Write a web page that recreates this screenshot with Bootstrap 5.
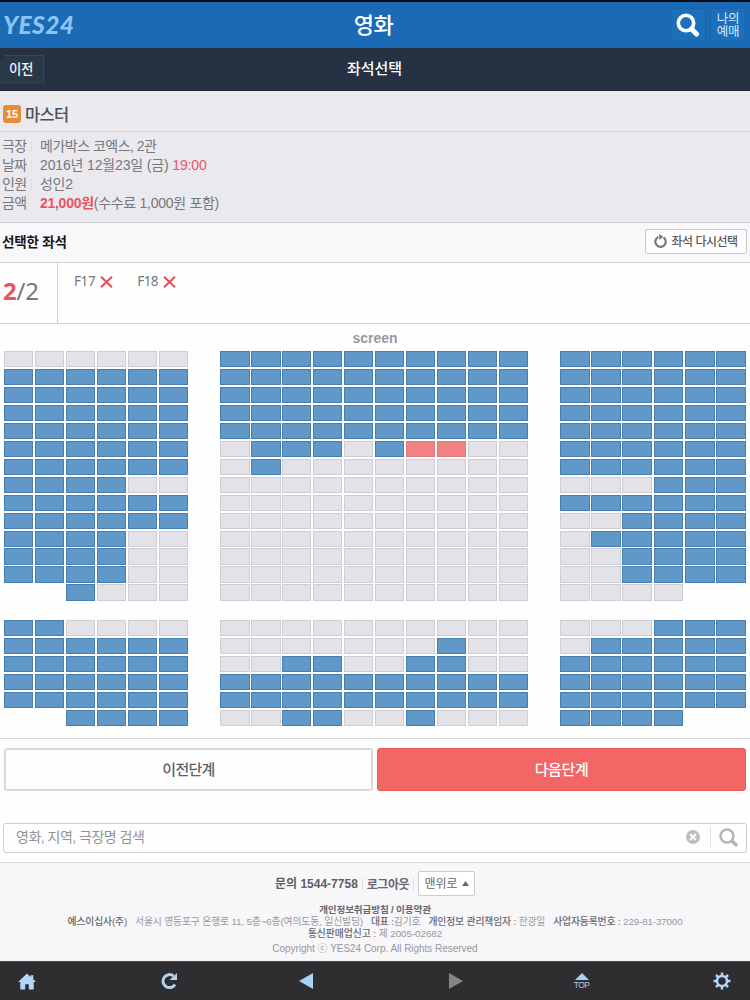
<!DOCTYPE html>
<html lang="ko">
<head>
<meta charset="utf-8">
<meta name="viewport" content="width=device-width, initial-scale=1">
<title>YES24 영화 - 좌석선택</title>
<link href="https://cdn.jsdelivr.net/npm/bootstrap@5.3.0/dist/css/bootstrap.min.css" rel="stylesheet">
<style>
body{font-family:"Liberation Sans","Noto Sans CJK KR",sans-serif;font-size:14px;line-height:19px;color:#77777c;background:#fefefe;width:750px;height:1000px;overflow:hidden;white-space:nowrap}
.kr{font-family:"Noto Sans CJK KR",sans-serif}
.topbar{height:48px;background:#1b6ab5;border-top:2px solid #060d18;display:grid;grid-template-columns:1fr auto 1fr}
.brand-text{font:italic 900 24.5px/1 Lato,sans-serif;color:#8cc4f4;letter-spacing:.4px;padding:0 0 0 3px}
.page-title{font-size:22px;font-weight:500;color:#fff;line-height:40px;letter-spacing:-.4px;padding:0 3px 5px 0}
.sq{width:36px;height:34px;border:1px solid #1964ae;border-radius:3px;background:#1c70bb}
.mine{color:#d5eaff;font-size:12.5px;line-height:13px;letter-spacing:-.2px;padding-bottom:2px}
.mine span{height:13px}
.subbar{height:43px;background:#263243;border-bottom:1px solid #1c2636;display:grid;grid-template-columns:1fr auto 1fr;color:#fff}
.back-btn{width:44px;height:29px;background:#2a3947;border:1px solid #35475a;border-left:0;clip-path:polygon(5px 0,100% 0,100% 100%,0 100%,0 8px);color:#eef3fa;font-size:13.5px;font-weight:500;line-height:25px;padding-left:9px;letter-spacing:-.4px}
.sub-title{font-size:15px;font-weight:500;line-height:38px;letter-spacing:0;padding:0 1px 2px 0}
.movie{height:41px;background:#ebebef;border-bottom:1px solid #cfcfd4;padding:6px 0 0 3px;font-size:16.5px;font-weight:500;color:#505055;letter-spacing:-.7px}
.rating{width:18px;height:18px;border-radius:3px;background:#ea8a3a;color:#fff;font:700 11px/18px "Liberation Sans",sans-serif;letter-spacing:0;text-align:center}
.info{height:91px;background:#e9e9ee;border-bottom:1px solid #d0d0d5;padding:4.500px 0 0 2px}
.info dt{width:31px;height:19px;font-weight:400;letter-spacing:-.6px;border:0}
.info dt span{display:inline-block;width:25px}
.info dd{margin:0 0 0 7px;height:19px;letter-spacing:-.28px}
.info .l1{letter-spacing:-.5px}
.info .l2{letter-spacing:-.15px}
.info i{width:1px;height:11px;background:#dedee4}
.coral{color:#e95560}
.selhead{height:40px;background:#f8f7f9;border-bottom:1px solid #d2d2d6;padding:0 3px 2px 2px;color:#161616;font-size:13.5px}
.selhead strong{letter-spacing:-.2px}
.reset-btn{width:102px;height:25px;background:#fefefe;border:1px solid #c9c9cd;border-radius:2px;color:#5a5a5e;font-size:12px;font-weight:500;letter-spacing:-.5px;padding:0 0 2px 0}
.picked{height:61px;border-bottom:1px solid #d0d0d2}
.count{width:58px;border-right:1px solid #cfcfd2;font:24px/55px "Noto Sans",sans-serif;padding-left:3px;letter-spacing:-.2px}
.chosen{padding:9px 0 0 16px;gap:24px;font:13.5px/19px "Noto Sans",sans-serif;letter-spacing:-.6px}
.chosen svg{margin-left:1px}
.chosen .f17{letter-spacing:-.4px}
.screen-label{height:27px;padding-top:5px;font-weight:700;font-size:14px;color:#98989c;line-height:19px;text-align:center}
.seat-map{height:388px;padding:0 4px;border-bottom:1px solid #d7d7da}
.seat-row{height:16.4px;margin-bottom:1.57px;display:grid;grid-template-columns:184.3px 307.3px 185.8px;column-gap:32.2px}
.aisle{margin-top:19.3px}
.blk{display:grid;column-gap:1.7px}
.c6{grid-template-columns:repeat(6,1fr)}.c10{grid-template-columns:repeat(10,1fr)}
.seat{border:1px solid #cecdd3;background:#e3e2e8}
.seat.sold{border-color:#457fae;background:#6098c8}
.seat.mineseat{border-color:#df7880;background:#f18282}
.seat.none{visibility:hidden}
.steps{height:84px;padding:9px 4px 0;gap:4px}
.step-btn{height:43px;border-radius:3px;font-size:15px;font-weight:500;letter-spacing:-.7px;padding:0 0 1px}
.prev{border:2px solid #d9d9dc;background:#fefefe;color:#626266}
.next{border:1px solid #e6595c;background:#f26666;color:#fff;letter-spacing:-.4px}
.search-box{height:30px;margin:0 3px;border:1px solid #cfcdd4;border-radius:3px;padding:0 8px 2px 12px;color:#919196;font-size:14px;letter-spacing:-.5px}
.clear-line{height:20px;margin:0 8px 0 10px}
.foot{margin-top:9px;height:99px;background:#f7f6f9;border-top:1px solid #d8d8dc;text-align:center;font-size:9.8px;line-height:12px;color:#98989d}
.foot b{font-weight:500;color:#68686d}
.contact{height:41px;font-size:12px;color:#5e5e63}
.foot .contact b{font-weight:700;letter-spacing:-.5px}
.up-btn{width:57px;height:25px;background:#fff;border:1px solid #cbcbd0;border-radius:2px;font-size:12px;color:#66666b;padding:0}
.fl1{font-size:9.6px;letter-spacing:-.15px}
.foot .fl1 b{font-weight:700}
.fl2{letter-spacing:-.14px}
.fl3{letter-spacing:-.05px}
.fl4{font-size:10px;margin-top:3px;letter-spacing:-.03px}
.toolbar{height:39px;background:#2e2d2f;border-top:1px solid #47464a;color:#a9d0f5;padding:0 0 0 18px;display:grid;grid-template-columns:142px 138px 150px 126px 139px 18px}
.top-icon{width:16px}
.toplabel{font:8.5px/9px "Liberation Sans",sans-serif;margin:1px 0 0 -1px;letter-spacing:-.6px}
</style>
</head>
<body>
<header class="topbar align-items-center">
  <div class="brand-text">YES24</div>
  <h1 class="page-title kr m-0">영화</h1>
  <div class="d-flex justify-content-end gap-1 pe-1">
    <div class="sq d-flex align-items-center justify-content-center"><svg width="24" height="24" viewBox="0 0 24 24" fill="none" stroke="#fff"><circle cx="10" cy="10" r="7.700" stroke-width="3.600"/><path d="M15.500 16l5 5" stroke-width="5" stroke-linecap="round"/></svg></div>
    <div class="sq mine kr d-flex flex-column align-items-center justify-content-center"><span>나의</span><span>예매</span></div>
  </div>
</header>
<nav class="subbar align-items-center">
  <div class="back-btn kr">이전</div><div class="sub-title kr">좌석선택</div>
</nav>
<section class="movie kr d-flex align-items-center"><span class="rating me-1">15</span>마스터</section>
<dl class="info m-0">
  <div class="d-flex"><dt class="d-flex align-items-center"><span>극장</span><i class="ms-1"></i></dt><dd class="l1">메가박스 코엑스, 2관</dd></div>
  <div class="d-flex"><dt class="d-flex align-items-center"><span>날짜</span><i class="ms-1"></i></dt><dd class="l2">2016년 12월23일 (금) <span class="coral">19:00</span></dd></div>
  <div class="d-flex"><dt class="d-flex align-items-center"><span>인원</span><i class="ms-1"></i></dt><dd>성인2</dd></div>
  <div class="d-flex"><dt class="d-flex align-items-center"><span>금액</span></dt><dd><strong class="coral">21,000원</strong>(수수료 1,000원 포함)</dd></div>
</dl>
<div class="selhead d-flex align-items-center justify-content-between">
  <strong class="kr">선택한 좌석</strong>
  <button class="btn reset-btn kr d-flex align-items-center justify-content-center"><svg class="me-1" width="13" height="14" viewBox="0 0 13 14" fill="none" stroke="#77777b" stroke-width="2.200"><path d="M4.300 3A5.200 5.200 0 1 0 9.500 3.400"/><path d="M5 0l4.300 2.700L5.500 6z" fill="#77777b" stroke="none"/></svg>좌석 다시선택</button>
</div>
<div class="picked d-flex">
  <div class="count"><b class="coral">2</b>/2</div>
  <div class="chosen d-flex align-items-start">
    <span class="f17 d-flex align-items-center gap-1">F17<svg width="13" height="12" viewBox="0 0 13 12" stroke="#e84d57" stroke-width="2"><path d="M1 .7l11 10.600M12 .7L1 11.300"/></svg></span>
    <span class="d-flex align-items-center gap-1">F18<svg width="13" height="12" viewBox="0 0 13 12" stroke="#e84d57" stroke-width="2"><path d="M1 .7l11 10.600M12 .7L1 11.300"/></svg></span>
  </div>
</div>
<div class="screen-label">screen</div>
<div class="seat-map" id="seatMap"></div>
<div class="steps d-flex">
  <button class="btn step-btn prev kr flex-fill w-50">이전단계</button>
  <button class="btn step-btn next kr flex-fill w-50">다음단계</button>
</div>
<div class="search-box d-flex align-items-center">
  <span class="flex-grow-1">영화, 지역, 극장명 검색</span>
  <svg width="14" height="14" viewBox="0 0 14 14"><circle cx="7" cy="7" r="7" fill="#bebec2"/><path d="M4 4l6 6M10 4l-6 6" stroke="#fff" stroke-width="2"/></svg>
  <span class="border-start clear-line"></span>
  <svg width="19" height="19" viewBox="0 0 19 19" fill="none" stroke="#b5b5ba"><circle cx="8" cy="8" r="6.500" stroke-width="2.500"/><path d="M13 13l4 3.800" stroke-width="3.500" stroke-linecap="round"/></svg>
</div>
<footer class="foot">
  <div class="contact d-flex align-items-center justify-content-center">
    <strong>문의 1544-7758</strong><span class="border-start mx-1" style="height:11px"></span><b class="kr">로그아웃</b><span class="border-start mx-1" style="height:11px"></span>
    <button class="btn up-btn d-flex align-items-center justify-content-center gap-1">맨위로<svg width="7" height="5" viewBox="0 0 7 5"><path d="M3.500 0L7 5H0z" fill="#66666b"/></svg></button>
  </div>
  <div class="fl1"><b>개인정보취급방침 / 이용약관</b></div>
  <div class="fl2"><b class="me-2">예스이십사(주)</b>서울시 영등포구 은행로 11, 5층~6층(여의도동, 일신빌딩)<b class="ms-2">대표 :</b>김기호<b class="ms-2">개인정보 관리책임자 :</b> 한광일<b class="ms-2">사업자등록번호 :</b> 229-81-37000</div>
  <div class="fl3"><b>통신판매업신고 :</b> 제 2005-02682</div>
  <div class="fl4">Copyright ⓒ YES24 Corp. All Rights Reserved</div>
</footer>
<nav class="toolbar align-items-center">
  <svg width="18" height="17" viewBox="0 0 20 18" fill="#b3d6f7"><path d="M10 0L0 9.500h2.500V18H8v-6h4v6h5.500V9.500H20l-3-3V2h-3v2z"/></svg>
  <svg width="18" height="18" viewBox="0 0 18 18" fill="none" stroke="#b3d2ec" stroke-width="3"><path d="M15 12.500A6.500 6.500 0 1 1 13.500 4"/><path d="M17 1v7H9.500z" fill="#b3d2ec" stroke="none"/></svg>
  <svg width="16" height="18" viewBox="0 0 16 18"><path d="M1 9L15 1v16z" fill="#a9d0f5"/></svg>
  <svg width="16" height="18" viewBox="0 0 16 18"><path d="M15 9L1 1v16z" fill="#858587"/></svg>
  <div class="text-center top-icon"><svg class="d-block mx-auto" width="14" height="7" viewBox="0 0 14 7"><path d="M7 0l7 7H0z" fill="#a9d0f5"/></svg><div class="toplabel">TOP</div></div>
  <svg width="18" height="18" viewBox="-9 -9 18 18" fill="none" stroke="#b3d6f7"><circle r="5" stroke-width="2.500"/><path stroke-width="2.500" d="M0-8.500V-5M0 8.500V5M-8.500 0H-5M8.500 0H5M-6-6l2.500 2.500M6 6L3.500 3.500M-6 6l2.500-2.500M6-6L3.500-3.500"/></svg>
</nav>
<script>
// b: sold, g: open, r: picked, '.': no seat; one string per block, left to right
const rows = [
 'gggggg bbbbbbbbbb bbbbbb','bbbbbb bbbbbbbbbb bbbbbb','bbbbbb bbbbbbbbbb bbbbbb','bbbbbb bbbbbbbbbb bbbbbb',
 'bbbbbb bbbbbbbbbb bbbbbb','bbbbbb gbbbgbrrgg bbbbbb','bbbbbb gbgggggggg bbbbbb','bbbbgg gggggggggg gggbbb',
 'bbbbbb gggggggggg bbbbbb','bbbbbb gggggggggg ggbbbb','bbbbgg gggggggggg gbbbbb','bbbbgg gggggggggg ggbbbb',
 'bbbbgg gggggggggg ggbbbb','..bggg gggggggggg gggg..',
 'bbgggg gggggggggg gggbbb','bbbbbb gggggggbgg gbbbbb','bbbbbb ggbbggbbgg bbbbbb','bbbbbb bbbbbbbbbb bbbbbb',
 'bbbbbb bbbbbbbbbb bbbbbb','..bbbb ggbbggbggg bbbb..'];
const kind = {b:'sold', g:'', r:'mineseat', '.':'none'};
document.getElementById('seatMap').innerHTML = rows.map((r, i) =>
  `<div class="seat-row${i === 14 ? ' aisle' : ''}">` + r.split(' ').map(b =>
    `<div class="blk c${b.length}">` + [...b].map(s => `<div class="seat ${kind[s]}"></div>`).join('') + '</div>').join('') + '</div>').join('');
</script>
<script src="https://cdn.jsdelivr.net/npm/bootstrap@5.3.0/dist/js/bootstrap.bundle.min.js"></script>
</body>
</html>
